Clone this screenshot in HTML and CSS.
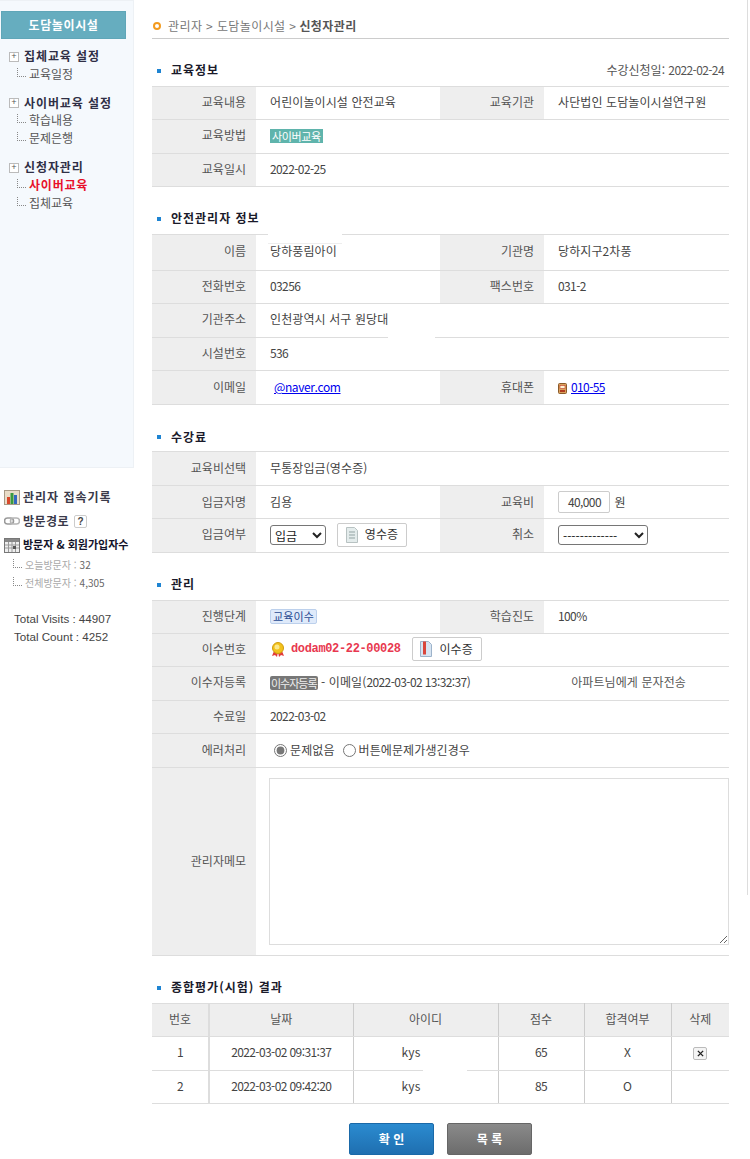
FILE: index.html
```html
<!DOCTYPE html>
<html lang="ko">
<head>
<meta charset="utf-8">
<title>신청자관리</title>
<link rel="stylesheet" href="styles.css">
</head>
<body>
<div class="page">
  <aside class="side">
    <nav class="menu">
      <div class="logo">도담놀이시설</div>
      <div class="group">
        <div class="g-title"><span class="plus">+</span>집체교육 설정</div>
        <div class="g-item"><span class="tree"></span>교육일정</div>
      </div>
      <div class="group">
        <div class="g-title"><span class="plus">+</span>사이버교육 설정</div>
        <div class="g-item"><span class="tree"></span>학습내용</div>
        <div class="g-item"><span class="tree"></span>문제은행</div>
      </div>
      <div class="group">
        <div class="g-title"><span class="plus">+</span>신청자관리</div>
        <div class="g-item on"><span class="tree"></span>사이버교육</div>
        <div class="g-item"><span class="tree"></span>집체교육</div>
      </div>
    </nav>
    <div class="stats">
      <div class="s-row wide">
        <svg class="s-ico" viewBox="0 0 16 16"><rect x="0.5" y="1.5" width="15" height="14" fill="#e9dcc8" stroke="#a89a86"/><rect x="3" y="8" width="3" height="7" fill="#d9482b"/><rect x="6.5" y="4" width="3" height="11" fill="#3a9a3f"/><rect x="10" y="6" width="3" height="9" fill="#3468c0"/></svg>
        관리자 접속기록
      </div>
      <div class="s-row mid">
        <svg class="s-ico" viewBox="0 0 16 16"><rect x="0.5" y="5" width="9" height="6" rx="3" fill="none" stroke="#9a9a9a" stroke-width="1.6"/><rect x="6.5" y="5" width="9" height="6" rx="3" fill="none" stroke="#b5b5b5" stroke-width="1.6"/></svg>
        방문경로 <span class="q">?</span>
      </div>
      <div class="s-row tight">
        <svg class="s-ico" viewBox="0 0 16 16"><rect x="0.5" y="1.5" width="15" height="14" fill="#eee" stroke="#777"/><rect x="1" y="2" width="14" height="3" fill="#888"/><path d="M1 8h14M1 11h14M4.5 5v10M8 5v10M11.5 5v10" stroke="#999" fill="none"/><rect x="9" y="9" width="3" height="3" fill="#555"/></svg>
        방문자 &amp; 회원가입자수
      </div>
      <div class="s-sub"><span class="tree"></span><span class="s-l">오늘방문자 :</span> 32</div>
      <div class="s-sub"><span class="tree"></span><span class="s-l">전체방문자 :</span> 4,305</div>
      <div class="totals">
        <div>Total Visits : 44907</div>
        <div>Total Count : 4252</div>
      </div>
    </div>
  </aside>

  <main class="main">
    <div class="crumb"><span class="dot"></span>관리자 &gt; 도담놀이시설 &gt; <b>신청자관리</b></div>

    <div class="sec"><span class="bullet"></span><h2>교육정보</h2><span class="date">수강신청일: <span class="num">2022-02-24</span></span></div>
    <table class="tb">
      <colgroup><col class="c1"><col class="c2"><col class="c3"><col></colgroup>
      <tr class="h33"><th>교육내용</th><td>어린이놀이시설 안전교육</td><th>교육기관</th><td>사단법인 도담놀이시설연구원</td></tr>
      <tr class="h34"><th>교육방법</th><td colspan="3"><span class="tag teal">사이버교육</span></td></tr>
      <tr class="h33"><th>교육일시</th><td colspan="3" class="num">2022-02-25</td></tr>
    </table>

    <div class="sec"><span class="bullet"></span><h2>안전관리자 정보</h2></div>
    <table class="tb">
      <colgroup><col class="c1"><col class="c2"><col class="c3"><col></colgroup>
      <tr class="h36"><th>이름</th><td class="patched"><span class="patch p-name"></span>당하풍림아이</td><th>기관명</th><td>당하지구2차풍</td></tr>
      <tr class="h33"><th>전화번호</th><td class="num">03256</td><th>팩스번호</th><td class="num">031-2</td></tr>
      <tr class="h34"><th>기관주소</th><td colspan="3" class="patched"><span class="patch p-addr"></span>인천광역시 서구 원당대</td></tr>
      <tr class="h33"><th>시설번호</th><td colspan="3" class="num">536</td></tr>
      <tr class="h34 low"><th>이메일</th><td><a class="lnk em" href="#">@naver.com</a></td><th>휴대폰</th><td><svg class="phone" viewBox="0 0 9 12"><rect x="0.5" y="1.5" width="8" height="10" rx="1" fill="#d9a05b" stroke="#8a5a2a"/><rect x="2" y="3.5" width="5" height="3" fill="#fff3d0" stroke="#c0392b" stroke-width="0.6"/><rect x="2" y="8" width="5" height="2" fill="#b03a20"/></svg><a class="lnk num" href="#">010-55</a></td></tr>
    </table>

    <div class="sec fee-sec"><span class="bullet"></span><h2>수강료</h2></div>
    <table class="tb">
      <colgroup><col class="c1"><col class="c2"><col class="c3"><col></colgroup>
      <tr class="h34 low"><th>교육비선택</th><td colspan="3">무통장입금(영수증)</td></tr>
      <tr class="h33 low"><th>입금자명</th><td>김용</td><th>교육비</th><td><span class="fee num">40,000</span> 원</td></tr>
      <tr class="h34"><th>입금여부</th><td><select class="sel s1"><option>입금</option></select><span class="btn"><svg class="b-ico" viewBox="0 0 12 16"><path d="M0.5 0.5h8l3 3v12h-11z" fill="#e4ecec" stroke="#b8c2c2"/><path d="M3 5h6M3 8h6M3 11h6" stroke="#93a3a3"/></svg>영수증</span></td><th>취소</th><td><select class="sel s2"><option>-------------</option></select></td></tr>
    </table>

    <div class="sec"><span class="bullet"></span><h2>관리</h2></div>
    <table class="tb">
      <colgroup><col class="c1"><col class="c2"><col class="c3"><col></colgroup>
      <tr class="h33"><th>진행단계</th><td><span class="tag blue">교육이수</span></td><th>학습진도</th><td class="num">100%</td></tr>
      <tr class="h33"><th>이수번호</th><td colspan="3"><div class="cert">
        <svg class="medal" viewBox="0 0 14 15"><path d="M3 9l-2 5 3-1 2 2 1-5zM11 9l2 5-3-1-2 2-1-5z" fill="#e23b3b"/><circle cx="7" cy="6" r="5.5" fill="#f2c21c" stroke="#d19d0c"/><circle cx="6" cy="5" r="2.5" fill="#fbe88a"/></svg>
        <span class="no">dodam02-22-00028</span>
        <span class="btn b2"><svg class="b-ico" viewBox="0 0 12 16"><path d="M0.5 0.5h8l3 3v12h-11z" fill="#d7e4f2" stroke="#9db3ca"/><rect x="3" y="0.5" width="3" height="13" fill="#d9453b"/></svg>이수증</span>
      </div></td></tr>
      <tr class="h34"><th>이수자등록</th><td colspan="3"><div class="reg"><span><span class="tag gray">이수자등록</span> - 이메일(<span class="num">2022-03-02 13:32:37</span>)</span><span class="sms">아파트님에게 문자전송</span></div></td></tr>
      <tr class="h33"><th>수료일</th><td colspan="3" class="num">2022-03-02</td></tr>
      <tr class="h34 low"><th>에러처리</th><td colspan="3"><div class="radios"><label><input type="radio" name="e" checked>문제없음</label><label><input type="radio" name="e">버튼에문제가생긴경우</label></div></td></tr>
      <tr class="h188 low"><th>관리자메모</th><td colspan="3"><textarea class="memo"></textarea></td></tr>
    </table>

    <div class="sec last"><span class="bullet"></span><h2>종합평가(시험) 결과</h2></div>
    <table class="tb res">
      <colgroup><col class="r1"><col class="r2"><col class="r3"><col class="r4"><col class="r5"><col></colgroup>
      <tr class="h33"><th>번호</th><th>날짜</th><th>아이디</th><th>점수</th><th>합격여부</th><th>삭제</th></tr>
      <tr class="h34"><td class="num">1</td><td class="num">2022-03-02 09:31:37</td><td class="id patched"><span class="patch p-kys"></span>kys</td><td class="num">65</td><td>X</td><td><span class="del"><svg viewBox="0 0 8 8"><path d="M1 1l6 6M7 1l-6 6" stroke="#222" stroke-width="1.6"/></svg></span></td></tr>
      <tr class="h33"><td class="num">2</td><td class="num">2022-03-02 09:42:20</td><td class="id">kys</td><td class="num">85</td><td>O</td><td></td></tr>
    </table>

    <div class="actions"><span class="act ok">확 인</span><span class="act list">목 록</span></div>
  </main>
  <div class="rail"></div>
</div>
</body>
</html>
```
FILE: styles.css
```css
* { box-sizing: border-box; }
html, body { margin: 0; padding: 0; background: #fff; }
body { font: 12px/1.2 "Noto Sans CJK KR", "Liberation Sans", sans-serif; color: #444; height: 1159px; overflow: hidden; }
.page { display: flex; width: 750px; height: 1159px; }

.side { width: 134px; flex: none; }
.menu { height: 468px; padding: 10px 7px 0 1px; background: #f5f9fd; border: 1px solid #edf1f5; border-width: 1px 1px 1px 0; }
.logo { height: 28px; background: #66adbf; border: 1px solid #5fa6b8; color: #fff; font-weight: 700; font-size: 12px; line-height: 26px; text-align: center; letter-spacing: 0.6px; margin-bottom: 9px; }
.group { margin-bottom: 11.5px; }
.g-title { display: flex; align-items: center; height: 17px; padding-left: 8px; font-weight: 700; color: #2f2f45; font-size: 12px; letter-spacing: 0.9px; }
.plus { width: 10px; height: 10px; border: 1px solid #bbb; background: #fff; color: #555; font: 9px/8px "Liberation Mono", monospace; letter-spacing: 0; text-align: center; margin-right: 5px; flex: none; }
.g-item { display: flex; align-items: center; height: 18px; padding-left: 16px; color: #555; font-size: 12px; }
.g-item.on { color: #e8102a; font-weight: 700; letter-spacing: 0.8px; }
.tree { width: 9px; height: 9px; border-left: 1px dotted #888; border-bottom: 1px dotted #888; margin: -4px 3px 0 0; flex: none; }

.stats { padding: 17px 0 0 4px; }
.s-row { display: flex; align-items: center; height: 24px; font-weight: 700; color: #3a3a4a; font-size: 12px; white-space: nowrap; }
.s-row.wide { letter-spacing: 1px; }
.s-row.mid { letter-spacing: 0.5px; }
.s-row.tight { color: #14142a; font-size: 11px; height: 23px; }
.s-ico { width: 16px; height: 16px; margin-right: 3px; flex: none; }
.q { display: inline-block; width: 13px; height: 13px; margin-left: 5px; border: 1px solid #ccc; border-radius: 2px; font: 700 10px/11px "Liberation Sans", sans-serif; letter-spacing: 0; text-align: center; color: #444; }
.s-sub { display: flex; align-items: center; height: 18px; padding-left: 9px; font-size: 10px; color: #666; white-space: nowrap; }
.s-l { color: #aaa; margin-right: 3px; }
.totals { margin: 18px 0 0 10px; font: 11.6px/18px "Liberation Sans", sans-serif; color: #444; }

.main { width: 577px; margin-left: 18px; flex: none; }
.crumb { height: 39px; padding-top: 14px; border-bottom: 1px solid #ccc; color: #777; font-size: 12px; line-height: 18px; letter-spacing: 0.4px; white-space: nowrap; display: flex; align-items: center; }
.crumb b { color: #555; margin-left: 3px; }
.dot { width: 8px; height: 8px; border: 2px solid #f39a1e; border-radius: 50%; margin: 0 7px 0 1px; flex: none; }

.sec { display: flex; align-items: center; height: 47px; padding: 18px 5px 2px 5px; }
.sec.fee-sec { height: 46px; padding-top: 20px; }
.sec.last { height: 47px; }
.bullet { width: 4px; height: 4px; background: #1e84d2; margin-right: 10px; flex: none; }
.sec h2 { margin: 0; font-size: 12px; font-weight: 700; color: #1a1a2a; letter-spacing: 1px; }
.date { margin-left: auto; font-size: 12px; color: #555; }

.num { letter-spacing: -0.6px; }

.tb { width: 577px; border-collapse: collapse; table-layout: fixed; border-top: 1px solid #ddd; }
.c1 { width: 104px; } .c2 { width: 184px; } .c3 { width: 104px; }
.tb th { background: #eee; font-weight: 400; color: #555; text-align: right; padding: 0 10px 2px 0; border-bottom: 1px solid #ddd; }
.tb td { padding: 0 0 2px 14px; color: #444; border-bottom: 1px solid #ddd; white-space: nowrap; overflow: hidden; letter-spacing: 0.1px; }
.tb td.num { letter-spacing: -0.6px; }
.tb .low th, .tb .low td { padding-bottom: 0; }
.tb td.patched { position: relative; overflow: visible; }
.patch { position: absolute; display: block; background: #fff; }
.p-name { left: 12px; top: -2px; width: 74px; height: 11px; border-bottom: 1px solid #eee; }
.p-addr { left: 132px; bottom: -2px; width: 47px; height: 4px; }
.p-kys { left: 69px; bottom: -2px; width: 44px; height: 4px; }
.h33 { height: 33px; } .h34 { height: 34px; } .h36 { height: 36px; } .h188 { height: 188px; }

.tag { display: inline-block; height: 14px; line-height: 14px; font-size: 11px; vertical-align: middle; }
.teal { background: #5fb4ac; color: #fff; padding: 0 2px; letter-spacing: -0.4px; }
.blue { background: #dfeafa; border: 1px solid #bcd0ec; border-radius: 2px; color: #2a4a92; height: 15px; line-height: 13px; padding: 0 2px; }
.gray { background: #777; color: #eee; border-radius: 2px; padding: 0 1px; letter-spacing: -1px; }

.lnk { color: #0000ee; text-decoration: underline; }
.em { margin-left: 4px; letter-spacing: -0.4px; }
.phone { width: 9px; height: 12px; margin-right: 4px; vertical-align: -2px; }
.fee { display: inline-block; width: 52px; height: 22px; line-height: 20px; border: 1px solid #ccc; border-radius: 2px; text-align: right; padding-right: 8px; margin-right: 1px; }
.sel { font: 12px "Noto Sans CJK KR", sans-serif; height: 20px; border: 1px solid #767676; border-radius: 3px; background: #fff; color: #222; padding: 0; vertical-align: middle; }
.s1 { width: 56px; } .s2 { width: 90px; }
.btn { display: inline-flex; align-items: center; justify-content: center; gap: 7px; width: 70px; height: 24px; border: 1px solid #ccc; border-radius: 2px; background: #fff; color: #333; font-size: 12px; margin-left: 11px; vertical-align: middle; }
.b-ico { width: 12px; height: 16px; }
.cert { display: flex; align-items: center; }
.medal { width: 14px; height: 15px; margin: 0 6px 0 1px; }
.no { font: 700 12px "Liberation Mono", monospace; color: #e8384f; letter-spacing: -0.35px; }
.reg { display: flex; justify-content: space-between; padding-right: 43px; }
.sms { color: #555; }
.radios { display: flex; gap: 8px; padding-left: 4px; }
.radios label { display: flex; align-items: center; }
.radios input { margin: 0 3px 0 0; width: 13px; height: 13px; accent-color: #777; }
.memo { display: block; width: 460px; height: 167px; border: 1px solid #ddd; background: #fff; margin: 0 0 0 -1px; }

.res th, .res td { text-align: center; padding: 0 0 2px; border-right: 1px solid #ccc; }
.res th:last-child, .res td:last-child { border-right: 0; }
.res th:first-child, .res td:first-child { border-right: 2px solid #ddd; }
.r1 { width: 57px; } .r2 { width: 144px; } .r3 { width: 145px; } .r4 { width: 86px; } .r5 { width: 87px; }
.res .id { padding-right: 29px; }
.del { display: inline-flex; align-items: center; justify-content: center; width: 14px; height: 13px; border: 1px solid #bbb; border-radius: 2px; background: #f4f4f4; vertical-align: middle; }
.del svg { width: 7px; height: 7px; }

.actions { display: flex; justify-content: center; gap: 13px; margin-top: 19px; }
.act { width: 85px; height: 32px; border-radius: 2px; color: #fff; font-weight: 700; font-size: 12px; line-height: 30px; text-align: center; }
.ok { background: linear-gradient(#2b8bd0, #1f6fb0); border: 1px solid #1a69a8; }
.list { background: linear-gradient(#8a8a8a, #6c6c6c); border: 1px solid #666; }
.rail { width: 1px; height: 895px; background: #ddd; margin-left: 18px; flex: none; }
```
